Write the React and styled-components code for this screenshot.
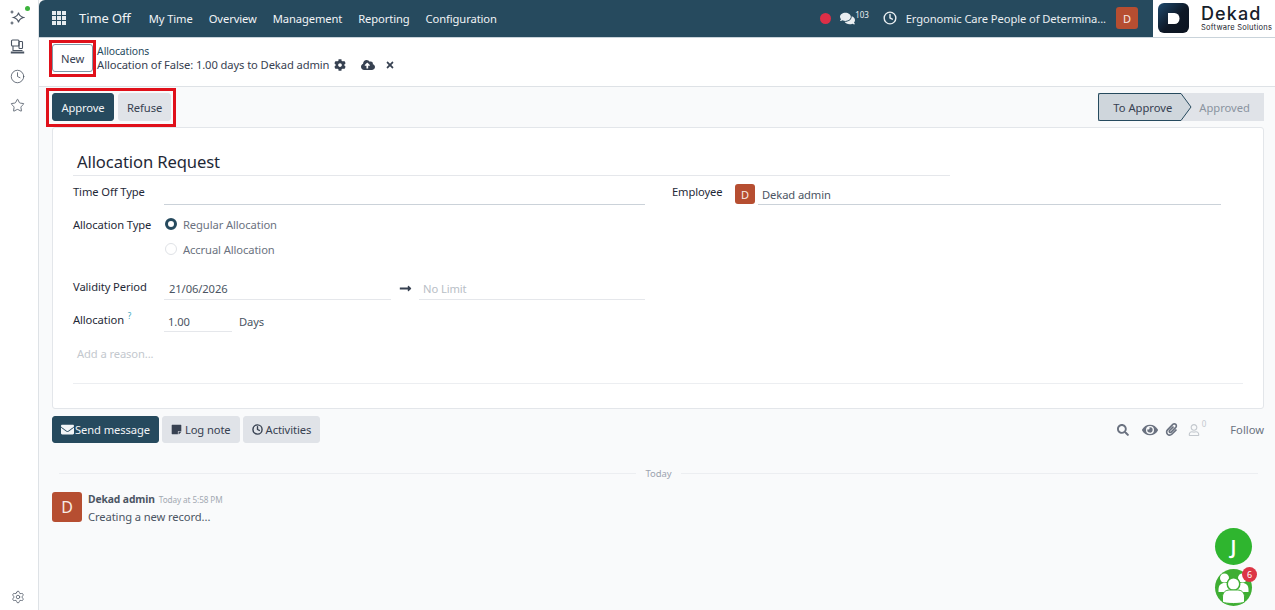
import React from 'react';
import styled, { createGlobalStyle } from 'styled-components';
import { FaCog, FaCloudUploadAlt, FaTimes, FaComments, FaEnvelope, FaStickyNote, FaSearch, FaEye, FaPaperclip, FaLongArrowAltRight, FaRegUser } from 'react-icons/fa';
import { Clock, Star, Settings } from 'lucide-react';

const GlobalStyle = createGlobalStyle`
  html, body { margin: 0; padding: 0; }
  body {
    font-family: "Noto Sans", "Open Sans", sans-serif;
    font-size: 11.2px;
    letter-spacing: -0.1px;
    color: #374151;
    background: #f9fafb;
  }
  * { box-sizing: border-box; }
`;

const Page = styled.div`
  position: relative;
  display: flex;
  width: 1275px;
  height: 610px;
  overflow: hidden;
`;

const Rail = styled.aside`
  width: 39px;
  flex: none;
  display: flex;
  flex-direction: column;
  align-items: center;
  padding: 9px 3px 5px 0;
  background: #fff;
  border-right: 1px solid #dee2e6;
  color: #4b5563;
`;

const RailIcon = styled.div`
  position: relative;
  width: 16px;
  height: 16px;
  margin-bottom: 13.5px;
  display: flex;
  align-items: center;
  justify-content: center;
  &:last-child { margin: auto 0 0; }
`;

const OnlineDot = styled.span`
  position: absolute;
  top: -3px;
  right: -4px;
  width: 5px;
  height: 5px;
  border-radius: 50%;
  background: #3cb43c;
`;

const Main = styled.div`
  flex: 1;
  min-width: 0;
  display: flex;
  flex-direction: column;
`;

const Navbar = styled.nav`
  height: 38px;
  flex: none;
  display: flex;
  align-items: stretch;
  background: #264a5e;
  color: #fff;
  border-top-left-radius: 6px;
  border-bottom: 1px solid #c9d3da;
`;

const NavLeft = styled.div`
  flex: 1;
  display: flex;
  align-items: center;
  padding: 0 0 1px 13px;
`;

const AppsIcon = styled.div`
  display: grid;
  grid-template-columns: repeat(3, 4px);
  grid-auto-rows: 4px;
  gap: 1px;
  margin-right: 13px;
  span { background: #e6ebee; }
`;

const AppName = styled.span`
  font-size: 13px;
  margin-right: 18px;
  color: #f1f4f6;
`;

const NavLink = styled.span`
  margin-right: 16px;
  color: #f1f4f6;
`;

const NavRight = styled.div`
  display: flex;
  align-items: center;
  padding: 0 15px 1px 0;
  color: #e9eef1;
`;

const RecordDot = styled.span`
  width: 11px;
  height: 11px;
  border-radius: 50%;
  background: #dc2f47;
  margin-right: 9px;
`;

const Messages = styled.span`
  display: flex;
  align-items: center;
  margin-right: 14px;
  sup { font-size: 8px; line-height: 1; margin: -7px 0 0 0; }
`;

const CompanyName = styled.span`
  margin: 0 10px 0 9px;
`;

const UserChip = styled.span`
  width: 22px;
  height: 22px;
  border-radius: 3px;
  display: flex;
  align-items: center;
  justify-content: center;
  background: #b64e31;
  color: #f7e9e4;
  font-size: 11px;
`;

const LogoBlock = styled.div`
  width: 122px;
  flex: none;
  display: flex;
  align-items: center;
  background: #fff;
  padding: 0 0 1px 5px;
  height: 37px;
`;

const LogoMark = styled.div`
  width: 31px;
  height: 30px;
  flex: none;
  border-radius: 6px;
  display: flex;
  align-items: center;
  justify-content: center;
  background: linear-gradient(135deg, #1e4a6e 0%, #0e1826 55%, #0b1320 100%);
  margin-right: 12px;
  svg { display: block; }
`;

const LogoText = styled.div`
  display: flex;
  flex-direction: column;
  color: #17202a;
`;

const LogoName = styled.span`
  font-family: "Inter", sans-serif;
  font-size: 18px;
  line-height: 19px;
  letter-spacing: 1.1px;
  font-weight: 500;
`;

const LogoTag = styled.span`
  font-family: "Inter", sans-serif;
  font-size: 7.5px;
  line-height: 9px;
  white-space: nowrap;
  letter-spacing: .25px;
`;

const ControlTop = styled.div`
  height: 49px;
  flex: none;
  display: flex;
  align-items: flex-start;
  padding: 5px 0 0 13px;
  background: #fff;
  border-bottom: 1px solid #dee2e6;
`;

const Marked = styled.div`
  display: flex;
  gap: 4px;
  outline: 3px solid #e0101a;
`;

const NewMark = styled(Marked)`
  padding: 1px 0 2px;
`;

const ActionMark = styled(Marked)`
  padding: 2px 2px 3px 3px;
`;

const Btn = styled.button`
  font-family: inherit;
  font-size: 11.2px;
  letter-spacing: -0.1px;
  height: ${p => p.$h || 28}px;
  min-width: ${p => p.$min || 0}px;
  padding: 0 8px;
  display: inline-flex;
  align-items: center;
  justify-content: center;
  gap: ${p => p.$gap || 3}px;
  border-radius: 3px;
  cursor: pointer;
  border: 1px solid ${p => (p.$variant === 'primary' ? '#264a5e' : p.$variant === 'outline' ? '#7f98a6' : '#e0e3e8')};
  background: ${p => (p.$variant === 'primary' ? '#264a5e' : p.$variant === 'outline' ? '#fff' : '#e0e3e8')};
  color: ${p => (p.$variant === 'primary' ? '#f2f5f7' : '#374151')};
`;

const Breadcrumb = styled.div`
  margin: 1px 0 0 4px;
  display: flex;
  flex-direction: column;
  color: #264a5e;
  font-size: 10.4px;
  line-height: 14px;
`;

const RecordLine = styled.div`
  display: flex;
  align-items: center;
  font-size: 11.2px;
  line-height: 14px;
  color: #374151;
`;

const RecordIcon = styled.span`
  display: flex;
  margin-left: ${p => p.$gap}px;
`;

const StatusBar = styled.div`
  height: 40px;
  flex: none;
  display: flex;
  align-items: flex-start;
  justify-content: space-between;
  padding: 4px 11px 0 10px;
  background: #f9fafb;
`;

const Stages = styled.div`
  display: flex;
  margin-top: 2px;
  height: 28px;
  letter-spacing: 0;
  background: #e0e3e8;
`;

const Stage = styled.div`
  position: relative;
  display: flex;
  align-items: center;
  padding: ${p => (p.$current ? '0 9px 0 14px' : '0 14px 0 18px')};
  color: ${p => (p.$current ? '#374151' : '#8a94a0')};
  background: ${p => (p.$current ? '#cfd6dc' : 'transparent')};
  border: ${p => (p.$current ? '1px solid #264a5e' : 'none')};
  border-right: none;
  border-radius: ${p => (p.$current ? '2px 0 0 2px' : '0')};
  svg { position: absolute; left: 100%; top: -1px; z-index: 1; }
`;

const Sheet = styled.section`
  flex: none;
  height: 282px;
  margin: 0 11px 0 13px;
  padding: 19px 20px 0;
  background: #fff;
  border: 1px solid #e3e6ea;
  border-radius: 3px;
`;

const Title = styled.h1`
  width: 877px;
  height: 29px;
  margin: 0;
  padding: 4px 0 0 4px;
  font-size: 16.6px;
  line-height: 22px;
  font-weight: 400;
  color: #1f2937;
  border-bottom: 1px solid #e5e7eb;
`;

const FormColumns = styled.div`
  display: grid;
  grid-template-columns: 572px 549px;
  column-gap: 27px;
  height: 208px;
  border-bottom: 1px solid #eceef1;
  padding-top: 4px;
`;

const FieldRow = styled.div`
  display: grid;
  grid-template-columns: ${p => p.$label || 91}px 1fr;
  height: ${p => p.$h}px;
`;

const Label = styled.label`
  line-height: 16px;
  color: #1f2937;
  padding-top: ${p => p.$top}px;
  sup { font-size: 8px; color: #3aa6c0; margin-left: 1px; line-height: 0; }
`;

const Line = styled.div`
  height: ${p => p.$h || 25}px;
  border-bottom: 1px solid ${p => (p.$strong ? '#cbd2d9' : '#e5e7eb')};
  padding: ${p => p.$top || 5}px 0 0 ${p => p.$pad || 4}px;
  line-height: 16px;
  color: ${p => (p.$muted ? '#b8bec6' : '#4b5563')};
  flex: ${p => (p.$grow ? 1 : 'none')};
  width: ${p => (p.$w ? `${p.$w}px` : 'auto')};
`;

const RadioGroup = styled.div`
  display: flex;
  flex-direction: column;
  gap: 9px;
  padding: 3px 0 0 1px;
`;

const RadioRow = styled.div`
  display: flex;
  align-items: center;
  height: 16px;
  color: #6b7280;
  gap: 6px;
`;

const Radio = styled.span`
  width: 12px;
  height: 12px;
  border-radius: 50%;
  background: #fff;
  border: ${p => (p.$on ? '3px solid #264a5e' : '1px solid #dfe2e6')};
`;

const Inline = styled.div`
  display: flex;
  align-items: flex-start;
`;

const ArrowCell = styled.span`
  width: 28px;
  display: flex;
  justify-content: center;
  padding-top: 6px;
  color: #374151;
`;

const Unit = styled.span`
  margin-left: 7px;
  padding-top: 5px;
  line-height: 16px;
  color: #4b5563;
`;

const Reason = styled.div`
  padding: 4px 0 0 4px;
  line-height: 16px;
  color: #c3c8ce;
`;

const EmployeeField = styled.div`
  display: flex;
  align-items: flex-start;
  gap: 3px;
`;

const Avatar = styled.span`
  flex: none;
  display: flex;
  align-items: center;
  justify-content: center;
  width: ${p => p.$size}px;
  height: ${p => p.$size}px;
  margin-top: ${p => p.$top || 0}px;
  border-radius: 3px;
  background: #b64e31;
  color: #f8ebe6;
  font-size: ${p => p.$font}px;
`;

const Chatter = styled.div`
  flex: 1;
  padding: 7px 11px 0 13px;
`;

const ChatterBar = styled.div`
  display: flex;
  align-items: center;
  justify-content: space-between;
`;

const ChatterButtons = styled.div`
  display: flex;
  gap: 3px;
`;

const ChatterTools = styled.div`
  display: flex;
  align-items: center;
  color: #6b7280;
  letter-spacing: 0;
`;

const Tool = styled.span`
  display: flex;
  margin-right: ${p => p.$gap}px;
`;

const Follower = styled.span`
  display: flex;
  color: #c3c8ce;
  margin-right: 24px;
  sup { font-size: 8px; line-height: 1; margin: -4px 0 0 2px; }
`;

const DateSep = styled.div`
  display: flex;
  align-items: center;
  gap: 10px;
  margin: 22px 0 0 7px;
  padding-right: 6px;
  height: 16px;
  font-size: 9.5px;
  color: #9ca3af;
  &::before, &::after { content: ''; flex: 1; height: 1px; background: #eceef1; }
`;

const Message = styled.div`
  display: flex;
  gap: 6px;
  margin-top: 11px;
`;

const MessageHead = styled.div`
  display: flex;
  align-items: baseline;
  gap: 4px;
  height: 16px;
  line-height: 15px;
  font-size: 10.3px;
  font-weight: 700;
  color: #4b5563;
  small { font-size: 8.2px; font-weight: 400; color: #a3a9b2; }
`;

const MessageBody = styled.div`
  line-height: 18px;
  color: #4b5563;
`;

const Fab = styled.div`
  position: absolute;
  left: 1215px;
  top: ${p => p.$top}px;
  width: 37px;
  height: 37px;
  border-radius: 50%;
  display: flex;
  align-items: center;
  justify-content: center;
  background: ${p => p.$bg};
  color: #fff;
  font-size: 19px;
  font-weight: 600;
`;

const FabBadge = styled.span`
  position: absolute;
  top: -2px;
  right: -5px;
  width: 15px;
  height: 15px;
  border-radius: 50%;
  background: #dc3545;
  color: #fff;
  font-size: 9px;
  font-weight: 400;
  display: flex;
  align-items: center;
  justify-content: center;
`;

const SparkIcon = () => (
  <svg width="15" height="15" viewBox="0 0 15 15" fill="none" stroke="currentColor" strokeWidth="1.1">
    <path d="M8.5 2.5C9 5.5 10.2 6.6 13.5 7.5C10.2 8.4 9 9.5 8.5 12.5C8 9.5 6.8 8.4 3.5 7.5C6.8 6.6 8 5.5 8.5 2.5Z" />
    <path d="M2 0.5v3M0.5 2h3M2 11.5v3M0.5 13h3" />
  </svg>
);

const ServerIcon = () => (
  <svg width="15" height="15" viewBox="0 0 15 15" fill="none" stroke="currentColor" strokeWidth="1.1">
    <rect x="1.5" y="1" width="7.5" height="6" rx="1" />
    <rect x="9" y="2.5" width="3.5" height="7" rx="0.8" />
    <path d="M3 7v4.5h9.5" />
    <path d="M0.8 13.5h13.4" strokeWidth="2" />
  </svg>
);

const GroupIcon = () => (
  <svg width="37" height="37" viewBox="0 0 37 37" style={{ display: 'block' }}>
    <g fill="#fff">
      <circle cx="9.5" cy="9" r="4.5" />
      <circle cx="27.5" cy="9" r="4.5" />
      <path d="M3.5 21c0-5 2.500-7 6-7h18c3.500 0 6 2 6 7v2H3.500z" />
      <circle cx="18.500" cy="15" r="7" fill="#3fae33" />
      <circle cx="18.500" cy="15" r="5.500" />
      <path d="M7.500 33v-5c0-4.500 3-7 7-7h8c4 0 7 2.500 7 7v5c-3 2-19 2-22 0z" stroke="#3fae33" strokeWidth="1" />
    </g>
  </svg>
);

const navItems = ['My Time', 'Overview', 'Management', 'Reporting', 'Configuration'];

export default function App() {
  return (
    <Page>
      <GlobalStyle />
      <Rail>
        <RailIcon><SparkIcon /><OnlineDot /></RailIcon>
        <RailIcon><ServerIcon /></RailIcon>
        <RailIcon><Clock size={15} strokeWidth={1.3} /></RailIcon>
        <RailIcon><Star size={15} strokeWidth={1.3} /></RailIcon>
        <RailIcon><Settings size={14} strokeWidth={1.3} /></RailIcon>
      </Rail>
      <Main>
        <Navbar>
          <NavLeft>
            <AppsIcon>{Array.from({ length: 9 }, (_, i) => <span key={i} />)}</AppsIcon>
            <AppName>Time Off</AppName>
            {navItems.map(item => <NavLink key={item}>{item}</NavLink>)}
          </NavLeft>
          <NavRight>
            <RecordDot />
            <Messages><FaComments size={15} /><sup>103</sup></Messages>
            <Clock size={14} strokeWidth={2.4} />
            <CompanyName>Ergonomic Care People of Determina...</CompanyName>
            <UserChip>D</UserChip>
          </NavRight>
          <LogoBlock>
            <LogoMark>
              <svg width="12" height="11" viewBox="0 0 12 11"><path d="M0 0h6.500a5 5.500 0 0 1 0 11H0z" fill="#fff" /></svg>
            </LogoMark>
            <LogoText>
              <LogoName>Dekad</LogoName>
              <LogoTag>Software Solutions</LogoTag>
            </LogoText>
          </LogoBlock>
        </Navbar>
        <ControlTop>
          <NewMark><Btn $variant="outline">New</Btn></NewMark>
          <Breadcrumb>
            <span>Allocations</span>
            <RecordLine>
              Allocation of False: 1.00 days to Dekad admin
              <RecordIcon $gap={5}><FaCog size={12} /></RecordIcon>
              <RecordIcon $gap={15}><FaCloudUploadAlt size={14} /></RecordIcon>
              <RecordIcon $gap={10}><FaTimes size={10} /></RecordIcon>
            </RecordLine>
          </Breadcrumb>
        </ControlTop>
        <StatusBar>
          <ActionMark>
            <Btn $variant="primary" $min={62}>Approve</Btn>
            <Btn>Refuse</Btn>
          </ActionMark>
          <Stages>
            <Stage $current>
              To Approve
              <svg width="11" height="28" viewBox="0 0 11 28">
                <path d="M0 0.500L10 14L0 27.500" fill="#cfd6dc" stroke="#264a5e" />
              </svg>
            </Stage>
            <Stage>Approved</Stage>
          </Stages>
        </StatusBar>
        <Sheet>
          <Title>Allocation Request</Title>
          <FormColumns>
            <div>
              <FieldRow $h={33}>
                <Label $top={4}>Time Off Type</Label>
                <Line $strong />
              </FieldRow>
              <FieldRow $h={63}>
                <Label $top={4}>Allocation Type</Label>
                <RadioGroup>
                  <RadioRow><Radio $on />Regular Allocation</RadioRow>
                  <RadioRow><Radio />Accrual Allocation</RadioRow>
                </RadioGroup>
              </FieldRow>
              <FieldRow $h={33}>
                <Label $top={3}>Validity Period</Label>
                <Inline>
                  <Line $w={227} $h={24} $pad={5}>21/06/2026</Line>
                  <ArrowCell><FaLongArrowAltRight size={13} /></ArrowCell>
                  <Line $grow $muted $h={24}>No Limit</Line>
                </Inline>
              </FieldRow>
              <FieldRow $h={33}>
                <Label $top={3}>Allocation <sup>?</sup></Label>
                <Inline>
                  <Line $w={68} $h={23}>1.00</Line>
                  <Unit>Days</Unit>
                </Inline>
              </FieldRow>
              <Reason>Add a reason...</Reason>
            </div>
            <div>
              <FieldRow $h={33} $label={63}>
                <Label $top={4}>Employee</Label>
                <EmployeeField>
                  <Avatar $size={20} $font={11} $top={4}>D</Avatar>
                  <Line $strong $grow $top={7}>Dekad admin</Line>
                </EmployeeField>
              </FieldRow>
            </div>
          </FormColumns>
        </Sheet>
        <Chatter>
          <ChatterBar>
            <ChatterButtons>
              <Btn $variant="primary" $h={27} $gap={1}><FaEnvelope size={13} />Send message</Btn>
              <Btn $h={27}><FaStickyNote size={11} />Log note</Btn>
              <Btn $h={27}><Clock size={11} strokeWidth={3} />Activities</Btn>
            </ChatterButtons>
            <ChatterTools>
              <Tool $gap={13}><FaSearch size={12} /></Tool>
              <Tool $gap={7}><FaEye size={16} /></Tool>
              <Tool $gap={10}><FaPaperclip size={13} /></Tool>
              <Follower><FaRegUser size={12} /><sup>0</sup></Follower>
              <span>Follow</span>
            </ChatterTools>
          </ChatterBar>
          <DateSep>Today</DateSep>
          <Message>
            <Avatar $size={30} $font={16}>D</Avatar>
            <div>
              <MessageHead>Dekad admin <small>Today at 5:58 PM</small></MessageHead>
              <MessageBody>Creating a new record...</MessageBody>
            </div>
          </Message>
        </Chatter>
      </Main>
      <Fab $top={528} $bg="#2fb52f">J</Fab>
      <Fab $top={569} $bg="#3fae33">
        <GroupIcon />
        <FabBadge>6</FabBadge>
      </Fab>
    </Page>
  );
}
